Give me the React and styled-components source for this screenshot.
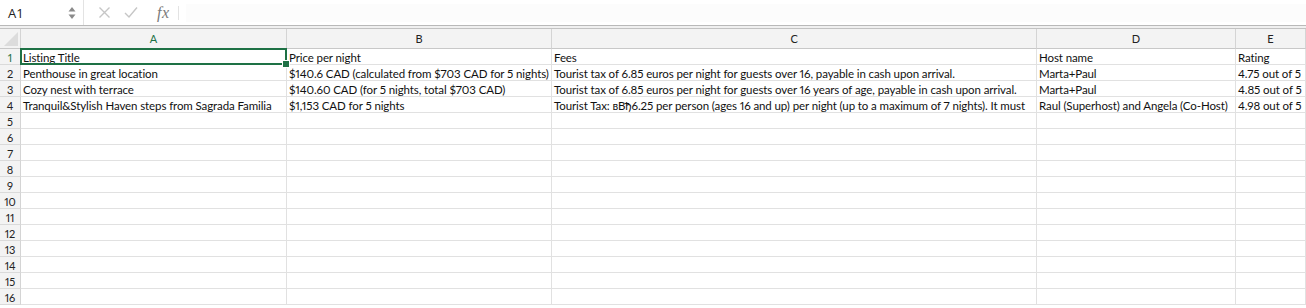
import React from 'react'
import styled, { createGlobalStyle } from 'styled-components'

const GREEN = '#1e7145'

const columns = [
    { key: 'A', width: 266 },
    { key: 'B', width: 265 },
    { key: 'C', width: 485 },
    { key: 'D', width: 199 },
    { key: 'E', width: 70 },
]

// C4 shows only what fits before the D column
const data = [
    ['Listing Title', 'Price per night', 'Fees', 'Host name', 'Rating'],
    ['Penthouse in great location', '$140.6 CAD (calculated from $703 CAD for 5 nights)', 'Tourist tax of 6.85 euros per night for guests over 16, payable in cash upon arrival.', 'Marta+Paul', '4.75 out of 5'],
    ['Cozy nest with terrace', '$140.60 CAD (for 5 nights, total $703 CAD)', 'Tourist tax of 6.85 euros per night for guests over 16 years of age, payable in cash upon arrival.', 'Marta+Paul', '4.85 out of 5'],
    ['Tranquil&Stylish Haven steps from Sagrada Familia', '$1,153 CAD for 5 nights', 'Tourist Tax: вВђ6.25 per person (ages 16 and up) per night (up to a maximum of 7 nights). It must', 'Raul (Superhost) and Angela (Co-Host)', '4.98 out of 5'],
]

const ROWS = 16

const GlobalStyle = createGlobalStyle`
    body {
        margin: 0;
        background: #ffffff;
        font-family: Lato, "Open Sans", sans-serif;
        overflow: hidden;
    }
`

export default function App() {
    const template = `21px ${columns.map(c => c.width + 'px').join(' ')} 1fr`

    return (
        <Page>
            <GlobalStyle />
            <Toolbar>
                <NameBox>
                    <span>A1</span>
                    <Stepper>
                        <svg width="8" height="14" viewBox="0 0 8 14">
                            <path d="M4 1 L7.5 5.5 L0.5 5.5 Z" fill="#8a8a8a" />
                            <path d="M4 13 L7.5 8.5 L0.5 8.5 Z" fill="#8a8a8a" />
                        </svg>
                    </Stepper>
                </NameBox>
                <ToolIcons>
                    <svg width="13" height="13" viewBox="0 0 13 13">
                        <path d="M1.5 1.5 L11.5 11.5 M11.5 1.5 L1.5 11.5" stroke="#c6c6c6" strokeWidth="1.4" />
                    </svg>
                    <svg width="14" height="13" viewBox="0 0 14 13">
                        <path d="M1 7 L5 11 L13 1.5" stroke="#c6c6c6" strokeWidth="1.4" fill="none" />
                    </svg>
                    <Fx>fx</Fx>
                </ToolIcons>
                <FormulaInput />
            </Toolbar>
            <Gap />
            <Grid style={{ gridTemplateColumns: template }}>
                <Corner>
                    <svg width="14" height="14" viewBox="0 0 14 14">
                        <path d="M14 0 L14 14 L0 14 Z" fill="#dcdcdc" />
                    </svg>
                </Corner>
                {columns.map(c => (
                    <ColHeader key={c.key} selected={c.key === 'A'}>{c.key}</ColHeader>
                ))}
                <ColHeader />
                {Array.from({ length: ROWS }, (_, r) => (
                    <React.Fragment key={r}>
                        <RowHeader selected={r === 0}>{r + 1}</RowHeader>
                        {columns.map((c, ci) => (
                            <Cell key={c.key} active={r === 0 && ci === 0}>
                                {data[r] ? data[r][ci] : ''}
                            </Cell>
                        ))}
                        <Cell />
                    </React.Fragment>
                ))}
            </Grid>
        </Page>
    )
}

const Page = styled.div`
    width: 1306px;
    height: 308px;
    overflow: hidden;
    background: #fff;
`

const Toolbar = styled.div`
    height: 26px;
    display: flex;
    align-items: stretch;
    background: #ffffff;
    border-bottom: 1px solid #b9b9b9;
    box-sizing: border-box;
`

const NameBox = styled.div`
    width: 84px;
    box-sizing: border-box;
    border-right: 1px solid #e3e3e3;
    display: flex;
    align-items: center;
    justify-content: space-between;
    padding: 1px 7px 0 8px;
    font-family: "Open Sans", Lato, sans-serif;
    font-size: 13px;
    color: #222;
`

const Stepper = styled.div`
    display: flex;
    align-items: center;
    height: 100%;
`

const ToolIcons = styled.div`
    width: 95px;
    display: flex;
    align-items: center;
    gap: 13px;
    padding-left: 14px;
    box-sizing: border-box;
    position: relative;

    &::after {
        content: '';
        position: absolute;
        right: 0;
        top: 6px;
        bottom: 5px;
        border-right: 1px solid #e3e3e3;
    }
`

const Fx = styled.span`
    font-family: "Liberation Serif", "DejaVu Serif", serif;
    font-style: italic;
    font-size: 16px;
    color: #7a7a7a;
    margin-left: 6px;
    letter-spacing: 0.5px;
`

const FormulaInput = styled.div`
    flex: 1;
    margin: 4px 0 3px 7px;
    background: #fcfcfc;
`

const Gap = styled.div`
    height: 2px;
    background: #f0f0f0;
    border-bottom: 1px solid #c2c2c2;
`

const Grid = styled.div`
    display: grid;
    grid-auto-rows: 16px;
    grid-template-rows: 20px;
    font-size: 11.5px;
    letter-spacing: -0.1px;
    font-variant-numeric: proportional-nums;
    color: #111;
`

const Corner = styled.div`
    background: #f3f3f3;
    border-right: 1px solid #d4d4d4;
    border-bottom: 1px solid #c8c8c8;
    box-sizing: border-box;
    display: flex;
    align-items: flex-end;
    justify-content: flex-end;
    padding: 0 2px 2px 0;
`

const ColHeader = styled.div`
    background: #f3f3f3;
    border-right: 1px solid #d4d4d4;
    border-bottom: 1px solid #c8c8c8;
    box-sizing: border-box;
    display: flex;
    align-items: center;
    justify-content: center;
    font-size: 11px;
    color: ${({ selected }) => selected ? GREEN : '#222'};
`

const RowHeader = styled.div`
    background: #f3f3f3;
    border-right: 1px solid #d4d4d4;
    border-bottom: 1px solid #dadada;
    box-sizing: border-box;
    display: flex;
    align-items: center;
    justify-content: center;
    padding-top: 1px;
    font-size: 11px;
    color: ${({ selected }) => selected ? GREEN : '#222'};
`

const Cell = styled.div`
    border-right: 1px solid #e1e1e1;
    border-bottom: 1px solid #e1e1e1;
    box-sizing: border-box;
    padding: 1px 2px 0;
    line-height: 15px;
    white-space: nowrap;
    overflow: ${({ active }) => active ? 'visible' : 'hidden'};
    position: relative;

    &::after {
        content: '';
        display: ${({ active }) => active ? 'block' : 'none'};
        position: absolute;
        left: -1px;
        top: -1px;
        right: -1px;
        bottom: -1px;
        border: 2px solid ${GREEN};
        pointer-events: none;
    }

    &::before {
        content: '';
        display: ${({ active }) => active ? 'block' : 'none'};
        position: absolute;
        right: -4px;
        bottom: -4px;
        width: 6px;
        height: 6px;
        background: ${GREEN};
        border: 1px solid #fff;
        z-index: 2;
    }
`
